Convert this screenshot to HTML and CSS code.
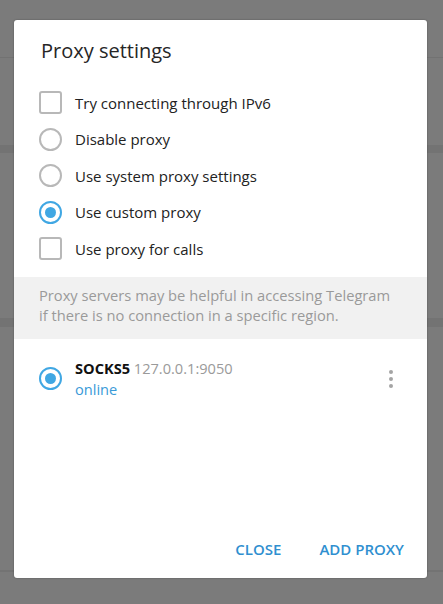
FILE: index.html
```html
<!DOCTYPE html>
<html>
<head>
<meta charset="utf-8">
<link rel="stylesheet" href="styles.css">
</head>
<body>
<div class="dialog">
  <div class="title">Proxy settings</div>
  <div class="options">
    <div class="opt"><span class="check"></span><span>Try connecting through IPv6</span></div>
    <div class="opt"><span class="radio"></span><span>Disable proxy</span></div>
    <div class="opt"><span class="radio"></span><span>Use system proxy settings</span></div>
    <div class="opt"><span class="radio on"></span><span>Use custom proxy</span></div>
    <div class="opt"><span class="check"></span><span>Use proxy for calls</span></div>
  </div>
  <div class="info">Proxy servers may be helpful in accessing Telegram<br>if there is no connection in a specific region.</div>
  <div class="proxy">
    <span class="radio on"></span>
    <div class="pinfo">
      <div class="pname"><b>SOCKS5</b> <span class="addr">127.0.0.1:9050</span></div>
      <div class="status">online</div>
    </div>
    <div class="kebab"><i></i><i></i><i></i></div>
  </div>
  <div class="footer">
    <span class="btn">CLOSE</span>
    <span class="btn">ADD PROXY</span>
  </div>
</div>
</body>
</html>
```
FILE: styles.css
```css
html, body {
  margin: 0;
  padding: 0;
}
body {
  width: 443px;
  height: 604px;
  overflow: hidden;
  padding-top: 20px;
  box-sizing: border-box;
  font-family: "Open Sans", "Noto Sans", sans-serif;
  background:
    linear-gradient(#727272, #727272) 0 57px / 100% 1px no-repeat,
    linear-gradient(#737373, #737373) 0 145px / 100% 8px no-repeat,
    linear-gradient(#737373, #737373) 0 318px / 100% 9px no-repeat,
    linear-gradient(#737373, #737373) 0 570px / 100% 2px no-repeat,
    #7b7b7b;
}
.dialog {
  margin-left: 14px;
  width: 413px;
  height: 558px;
  background: #fff;
  border-radius: 3px;
  box-shadow: 0 0 2px rgba(0,0,0,0.35);
  display: flex;
  flex-direction: column;
  box-sizing: border-box;
}
.title {
  padding: 17.5px 27px 0;
  font-size: 20px;
  line-height: 26px;
  font-weight: 500;
  color: #262626;
}
.options {
  margin-top: 21px;
  padding-left: 25px;
  display: flex;
  flex-direction: column;
}
.opt {
  height: 36.5px;
  display: flex;
  align-items: center;
  gap: 13px;
  font-size: 15px;
  color: #222;
}
.check {
  width: 23px;
  height: 23px;
  box-sizing: border-box;
  border: 2px solid #b8b8b8;
  border-radius: 3px;
  flex: none;
}
.radio {
  width: 23px;
  height: 23px;
  box-sizing: border-box;
  border: 2px solid #b8b8b8;
  border-radius: 50%;
  flex: none;
  display: flex;
  align-items: center;
  justify-content: center;
}
.radio.on {
  border-color: #40a7e3;
}
.radio.on::after {
  content: "";
  width: 11px;
  height: 11px;
  border-radius: 50%;
  background: #40a7e3;
}
.info {
  margin-top: 10px;
  background: #f1f1f1;
  padding: 8px 25px 14px;
  font-size: 14.7px;
  line-height: 20px;
  color: #9a9a9a;
}
.proxy {
  padding: 18.7px 25px 0;
  display: flex;
  align-items: center;
  gap: 13px;
}
.pinfo {
  flex: 1;
  font-size: 14.6px;
  line-height: 21px;
}
.pname b {
  font-weight: 700;
  color: #111;
}
.addr {
  color: #9a9a9a;
}
.status {
  color: #3a9ad8;
}
.kebab {
  display: flex;
  flex-direction: column;
  gap: 3px;
  margin-right: 9px;
}
.kebab i {
  width: 4px;
  height: 4px;
  border-radius: 50%;
  background: #a4a4a4;
}
.footer {
  margin-top: auto;
  display: flex;
  justify-content: flex-end;
  padding: 0 9px 11px 0;
  gap: 10px;
}
.btn {
  padding: 0 14px;
  line-height: 36px;
  font-size: 15px;
  font-weight: 600;
  color: #2f8fd0;
}
```
